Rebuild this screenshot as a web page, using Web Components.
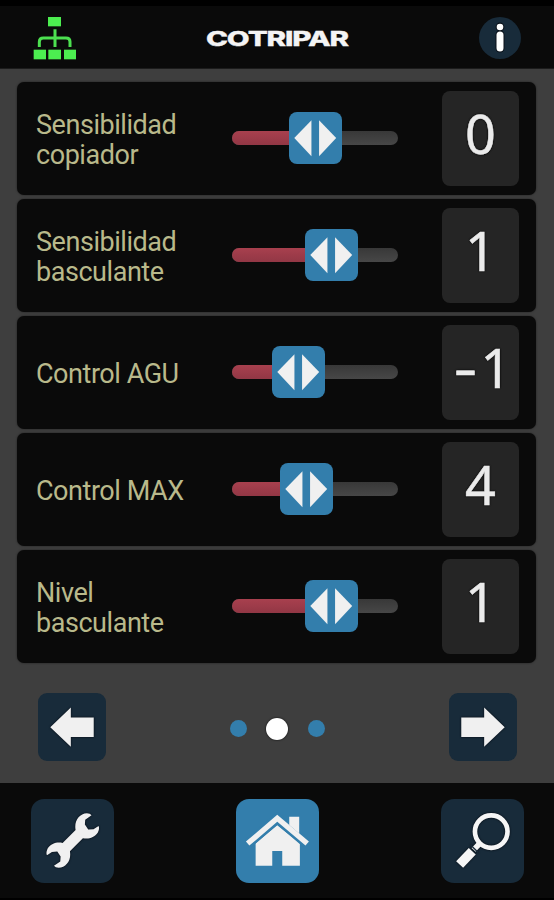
<!DOCTYPE html>
<html lang="es">
<head>
<meta charset="utf-8">
<title>Cotripar</title>
<style>
  body {
    margin: 0;
    background: #000;
    font-family: Roboto, "Liberation Sans", sans-serif;
  }
</style>
</head>
<body>
<control-app></control-app>

<script>
/**
 * Base class, clones the template of each element into its shadow root
 */

class BaseElement extends HTMLElement {
  connectedCallback() {
    let t = document.createElement('template');
    t.innerHTML = this.template;
    let sr = this.attachShadow({ mode: 'open' });
    sr.appendChild(t.content.cloneNode(true));
  }
}

/**
 * Top bar: connection status, logo, info button
 */

class AppHeader extends BaseElement {
  get template() {
    return `
      <style>
        :host {
          display: flex;
          align-items: center;
          justify-content: space-between;
          box-sizing: border-box;
          height: 69px;
          padding: 5px 33px 0;
          background: #0a0a0a;
          border-top: 6px solid #000;
          border-bottom: 1px solid #1c1c1c;
        }
        svg { display: block; }
        .net { margin-top: -4px; }
        .logo { margin: 0 0 3px; }
        .info { margin-top: -4px; }
        text {
          font: 800 20.5px Inter, "Liberation Sans", sans-serif;
          fill: #f4f4f4;
          stroke: #f4f4f4;
          stroke-width: .3px;
        }
      </style>
      <svg class="net" width="44" height="44" viewBox="99 45 132 132">
        <g fill="#4cee50">
          <rect x="144" y="48" width="39" height="28"/>
          <rect x="101" y="146" width="37" height="29"/>
          <rect x="145" y="146" width="38" height="29"/>
          <rect x="192" y="146" width="36" height="29"/>
        </g>
        <path d="M165 85V138M118 138V122Q118 111 130 111H198Q210 111 210 122V138" fill="none" stroke="#4ce050" stroke-width="9"/>
      </svg>
      <svg class="logo" width="144" height="22" viewBox="0 0 144 22">
        <text x="0" y="18.5" textLength="142" lengthAdjust="spacingAndGlyphs" letter-spacing="-.8">COTRIPAR</text>
      </svg>
      <svg class="info" width="42" height="42" viewBox="0 0 42 42">
        <circle cx="21" cy="21" r="21" fill="#182b3a"/>
        <circle cx="21" cy="10" r="4.4" fill="#0a1119"/>
        <path d="M21 18V31" stroke="#0a1119" stroke-width="9" stroke-linecap="round"/>
        <circle cx="21" cy="10" r="3.3" fill="#fff"/>
        <path d="M21 18V31" stroke="#fff" stroke-width="7" stroke-linecap="round"/>
      </svg>
    `;
  }
}

/**
 * Horizontal slider, "at" is the left edge of the thumb in px
 */

class RangeSlider extends BaseElement {
  get template() {
    let at = this.getAttribute('at');
    return `
      <style>
        :host {
          display: block;
          position: relative;
          width: 166px;
          height: 14px;
          border-radius: 7px;
          background: linear-gradient(#383838, #474747);
        }
        .fill {
          width: ${at}px;
          height: 14px;
          padding-right: 10px;
          border-radius: 7px 0 0 7px;
          background: linear-gradient(#a8404e, #923745);
        }
        .thumb {
          position: absolute;
          left: ${at}px;
          top: -19.5px;
          width: 52.5px;
          height: 52.5px;
          border-radius: 8px;
          background: #337eac;
        }
        svg { display: block; }
      </style>
      <div class="fill"></div>
      <div class="thumb">
        <svg width="52.5" height="52.5" viewBox="0 0 159 159" fill="#f0f0f0">
          <path d="M16 79L68 25V134Z"/>
          <path d="M143 79L91 25V134Z"/>
        </svg>
      </div>
    `;
  }
}

/**
 * One setting: label, slider and its value
 */

class SettingRow extends BaseElement {
  get template() {
    let value = this.getAttribute('value');
    let digits = value.replace('-', '');
    let sign = value.startsWith('-') ? '<span class="sign">-</span>' : '';
    return `
      <style>
        :host {
          display: grid;
          grid-template-columns: 196px 210px 77px;
          align-items: center;
          box-sizing: border-box;
          height: 112.5px;
          padding-left: 19px;
          border-radius: 7px;
          background: #0a0a0a;
          box-shadow: 0 0 2px #1e1e1e;
        }
        .label {
          color: #b9b98b;
          font-size: 27px;
          letter-spacing: -.45px;
          line-height: 30.5px;
          padding-top: 4px;
        }
        .value {
          box-sizing: border-box;
          height: 95px;
          display: flex;
          justify-content: center;
          border-radius: 8px;
          background: #252525;
          color: #ebebeb;
          font: 54px/85px "Noto Sans", sans-serif;
          -webkit-text-stroke: .5px #ebebeb;
          text-shadow: 0 0 2px #000, 0 0 2px #000;
        }
        .sign {
          display: inline-block;
          width: 31px;
          text-align: center;
          transform: scaleX(1.35);
        }
      </style>
      <div class="label"><slot></slot></div>
      <range-slider at="${this.getAttribute('at')}"></range-slider>
      <div class="value">${sign}${digits}</div>
    `;
  }
}

/**
 * Square icon button
 */

class IconButton extends BaseElement {
  get icon() {
    return {
      arrow: '<path d="M37 103L99 44V74H168V133H99V162Z"/>',
      wrench: `<path d="M134 93C129 66 145 44 168 43Q178 43 182 49L163 62L162 77L172 92L188 91L203 81
        Q207 88 201 101C190 117 174 121 156 118L117 157C122 184 106 206 83 207Q73 207 69 201L88 188L89 173L79 158L63 159
        L48 169Q44 162 50 149C61 133 77 129 95 132Z"/>`,
      home: `<path d="M59 201V133L124 79L192 133V201H139V156H109V201Z"/>
        <path d="M37 133L124 58L212 133" fill="none" stroke="#337eac" stroke-width="30"/>
        <path d="M160 53H190V104L160 78Z"/>
        <path d="M35 134L124 58L214 134" fill="none" stroke="#f0f0f0" stroke-width="16"/>`,
      search: `<g fill="none" stroke="#f6f6f6">
        <circle cx="151" cy="98" r="49" stroke-width="14"/>
        <path d="M116 134L98 153" stroke-width="17"/>
        <path d="M94 157L56 197" stroke-width="29"/></g>
        <path d="M89 138L112 161" stroke="#182b3a" stroke-width="4"/>`
    }[this.getAttribute('icon')];
  }

  get template() {
    let small = this.getAttribute('icon') === 'arrow';
    let box = small ? 205 : 251;
    return `
      <style>
        :host {
          display: block;
          width: ${small ? 68 : 83.5}px;
          height: ${small ? 68 : 83.5}px;
          border-radius: ${small ? 9 : 13}px;
          background: #182b3a;
        }
        :host([active]) { background: #337eac; }
        :host([flip]) { transform: scaleX(-1); }
        svg { display: block; }
        :host(:not([active])) svg { filter: drop-shadow(0 0 1px #03070e); }
      </style>
      <svg width="100%" height="100%" viewBox="0 0 ${box} ${box}" fill="#f0f0f0">${this.icon}</svg>
    `;
  }
}

/**
 * Page navigation with arrows and dots
 */

class PagerBar extends BaseElement {
  get template() {
    return `
      <style>
        :host {
          display: flex;
          align-items: center;
          justify-content: space-between;
          padding: 0 37px 0 37.5px;
        }
        .dots {
          display: flex;
          align-items: center;
          gap: 19.5px;
          margin-top: 3px;
        }
        i {
          width: 17px;
          height: 17px;
          border-radius: 50%;
          background: #337eac;
        }
        .on {
          width: 22px;
          height: 22px;
          background: #fff;
          box-shadow: 0 0 2px #000;
        }
      </style>
      <icon-button icon="arrow"></icon-button>
      <div class="dots"><i></i><i class="on"></i><i></i></div>
      <icon-button icon="arrow" flip></icon-button>
    `;
  }
}

/**
 * Bottom bar
 */

class AppFooter extends BaseElement {
  get template() {
    return `
      <style>
        :host {
          display: flex;
          justify-content: space-between;
          box-sizing: border-box;
          height: 117px;
          padding: 16px 30px 0 30.5px;
          background: #0a0a0a;
          border-bottom: 2px solid #000;
        }
      </style>
      <slot></slot>
    `;
  }
}

class ControlApp extends BaseElement {
  get template() {
    return `
      <style>
        :host {
          display: flex;
          flex-direction: column;
          width: 554px;
          height: 900px;
          overflow: hidden;
        }
        main {
          height: 714px;
          box-sizing: border-box;
          padding-top: 13px;
          background: #3e3e3e;
        }
        .rows {
          display: grid;
          gap: 4.5px;
          padding: 0 18px 0 17px;
          margin-bottom: 30.5px;
        }
      </style>
      <app-header></app-header>
      <main>
        <div class="rows">
          <setting-row at="57" value="0">Sensibilidad<br>copiador</setting-row>
          <setting-row at="73" value="1">Sensibilidad<br>basculante</setting-row>
          <setting-row at="40" value="-1">Control AGU</setting-row>
          <setting-row at="48" value="4">Control MAX</setting-row>
          <setting-row at="73" value="1">Nivel<br>basculante</setting-row>
        </div>
        <pager-bar></pager-bar>
      </main>
      <app-footer>
        <icon-button icon="wrench"></icon-button>
        <icon-button icon="home" active></icon-button>
        <icon-button icon="search"></icon-button>
      </app-footer>
    `;
  }
}

customElements.define('app-header', AppHeader);
customElements.define('range-slider', RangeSlider);
customElements.define('setting-row', SettingRow);
customElements.define('icon-button', IconButton);
customElements.define('pager-bar', PagerBar);
customElements.define('app-footer', AppFooter);
customElements.define('control-app', ControlApp);
</script>
</body>
</html>
